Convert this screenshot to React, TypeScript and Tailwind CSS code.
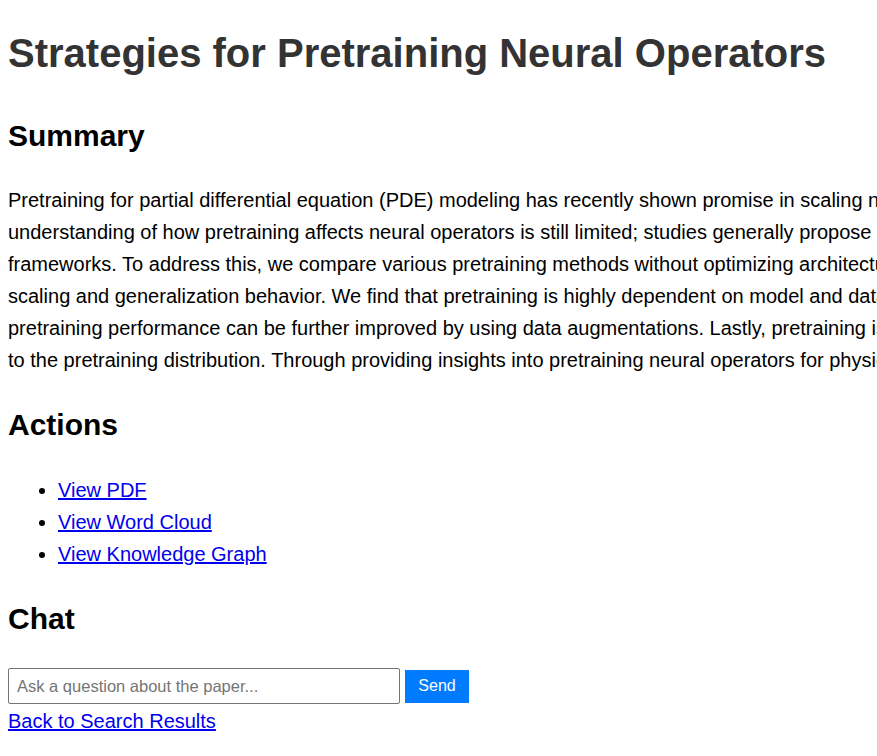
import React from 'react';

const lines = [
  'Pretraining for partial differential equation (PDE) modeling has recently shown promise in scaling neural operators across datasets to improve generalizability and performance. Despite these advances, our',
  'understanding of how pretraining affects neural operators is still limited; studies generally propose tailored architectures and datasets that make it challenging to compare or examine different pretraining',
  'frameworks. To address this, we compare various pretraining methods without optimizing architecture choices to characterize pretraining dynamics on different models and datasets as well as to understand its',
  'scaling and generalization behavior. We find that pretraining is highly dependent on model and dataset choices, but in general transfer learning or physics-based pretraining strategies work best. In addition,',
  'pretraining performance can be further improved by using data augmentations. Lastly, pretraining is additionally beneficial when fine-tuning in scarce data regimes or when generalizing to downstream data similar',
  'to the pretraining distribution. Through providing insights into pretraining neural operators for physics prediction, we hope to motivate future work in developing and evaluating pretraining methods for PDEs.',
];

const App: React.FC = () => {
  return (
    <div className="min-h-screen w-full overflow-hidden bg-white font-['Liberation_Sans',Arial,sans-serif] text-[20px] leading-[1.6] text-black">
      <div className="flex flex-col items-start px-2 pt-[21px] pb-4">
        <h1 className="mb-[27px] whitespace-nowrap text-[40px] font-bold leading-[64px] text-[#333]">
          Strategies for Pretraining Neural Operators
        </h1>

        {/* Summary */}
        <h2 className="mb-[24px] text-[30px] font-bold leading-[48px]">Summary</h2>
        <p className="whitespace-nowrap leading-8">
          {lines.map((line, i) => (
            <React.Fragment key={i}>
              {line}
              {i < lines.length - 1 && <br />}
            </React.Fragment>
          ))}
        </p>

        {/* Actions */}
        <h2 className="mt-[25px] text-[30px] font-bold leading-[48px]">Actions</h2>
        <ul className="mt-[25px] list-disc pl-[50px] leading-8">
          <li>
            <a href="#" className="text-[#0000ee] underline">View PDF</a>
          </li>
          <li>
            <a href="#" className="text-[#0000ee] underline">View Word Cloud</a>
          </li>
          <li>
            <a href="#" className="text-[#0000ee] underline">View Knowledge Graph</a>
          </li>
        </ul>

        {/* Chat */}
        <h2 className="mt-[25px] text-[30px] font-bold leading-[48px]">Chat</h2>
        <div className="mt-[25px] flex items-center">
          <input
            type="text"
            placeholder="Ask a question about the paper..."
            className="h-9 w-[392px] rounded-[2px] border border-[#767676] px-2 text-[16.5px] leading-normal text-black placeholder:text-[#757575]"
          />
          <button className="ml-[5px] h-[33px] w-16 bg-[#007bff] text-[16px] leading-normal text-white">
            Send
          </button>
        </div>
        <a href="#" className="mt-[1px] block leading-8 text-[#0000ee] underline">
          Back to Search Results
        </a>
      </div>
    </div>
  );
};

export default App;
